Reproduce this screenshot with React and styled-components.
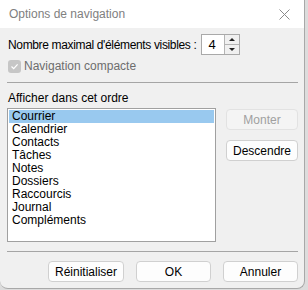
import React from 'react'
import styled, { createGlobalStyle } from 'styled-components'

const GlobalStyle = createGlobalStyle`
  html, body {
    margin: 0;
    padding: 0;
    background: #dcdcdc;
  }
  body {
    font-family: "Liberation Sans", Arial, sans-serif;
    font-size: 12px;
    color: #000;
  }
`

const Window = styled.div`
  width: 304px;
  height: 288px;
  background: #f0f0f0;
  border-right: 1px solid #a8a8a8;
  border-bottom: 1px solid #a8a8a8;
  border-radius: 0 0 8px 8px;
  display: flex;
  flex-direction: column;
  overflow: hidden;
`

const TitleBar = styled.div`
  height: 28px;
  background: #fff;
  display: flex;
  align-items: center;
  justify-content: space-between;
  padding: 0 14px 0 9px;
  color: #808080;
  font-size: 12px;
`

const Body = styled.div`
  flex: 1;
  padding: 0 6px 0 7px;
  display: flex;
  flex-direction: column;
`

const CountRow = styled.div`
  display: flex;
  align-items: center;
  height: 21px;
  margin-top: 6px;
  padding-left: 1px;
  gap: 5px;
`

const CountLabel = styled.span`
  letter-spacing: -0.35px;
`

const Spin = styled.div`
  display: flex;
  width: 39px;
  height: 21px;
  box-sizing: border-box;
  border: 1px solid #a9a9a9;
  background: #fff;
`

const SpinValue = styled.div`
  flex: 1;
  padding-left: 6px;
  display: flex;
  align-items: center;
  font-size: 13px;
`

const SpinArrows = styled.div`
  width: 14px;
  display: flex;
  flex-direction: column;
  border-left: 1px solid #b4b4b4;
  background: #f0f0f0;
`

const Arrow = styled.div`
  flex: 1;
  display: flex;
  align-items: center;
  justify-content: center;
  border-top: ${(p) => (p.$down ? '1px solid #b4b4b4' : 'none')};
  &::after {
    content: '';
    border-left: 3px solid transparent;
    border-right: 3px solid transparent;
    ${(p) => (p.$down ? 'border-top: 3px solid #222;' : 'border-bottom: 3px solid #222;')}
  }
`

const CheckRow = styled.label`
  display: flex;
  align-items: center;
  gap: 3px;
  margin-top: 4px;
  height: 14px;
  padding-left: 1px;
  color: #6d6d6d;
`

const Check = styled.span`
  width: 13px;
  height: 13px;
  border-radius: 3px;
  background: #c6c6c6;
  display: flex;
  align-items: center;
  justify-content: center;
`

const Separator = styled.div`
  height: 1px;
  background: #a5a5a5;
  margin-top: ${(p) => p.$top}px;
`

const ListLabel = styled.div`
  margin-top: 8px;
  padding-left: 1px;
  height: 15px;
  line-height: 15px;
`

const ListArea = styled.div`
  display: flex;
  align-items: flex-start;
  gap: 10px;
  margin-top: 2px;
`

const ListBox = styled.ul`
  list-style: none;
  margin: 0;
  width: 209px;
  height: 134px;
  box-sizing: border-box;
  border: 1px solid #a0a0a0;
  background: #fff;
  padding: 1px;
`

const Item = styled.li`
  height: 13px;
  line-height: 13px;
  padding-left: 3px;
  background: ${(p) => (p.$selected ? '#99c9ef' : 'transparent')};
`

const SideButtons = styled.div`
  display: flex;
  flex-direction: column;
  gap: 10px;
  margin-top: 1px;
`

const Button = styled.button`
  width: ${(p) => p.$w || 75}px;
  height: 21px;
  box-sizing: border-box;
  font-family: inherit;
  font-size: 12px;
  border-radius: 4px;
  padding: 0;
  border: 1px solid ${(p) => (p.disabled ? '#e2e2e2' : '#d0d0d0')};
  background: ${(p) => (p.disabled ? '#f4f4f4' : '#fdfdfd')};
  color: ${(p) => (p.disabled ? '#a0a0a0' : '#000')};
`

const Footer = styled.div`
  display: flex;
  justify-content: flex-end;
  gap: 12px;
  margin-top: 9px;
`

const items = ['Courrier', 'Calendrier', 'Contacts', 'Tâches', 'Notes', 'Dossiers', 'Raccourcis', 'Journal', 'Compléments']

const App = () => {
  return (
    <>
      <GlobalStyle />
      <Window>
        <TitleBar>
          <span>Options de navigation</span>
          <svg width="11" height="11" viewBox="0 0 11 11">
            <path d="M0.5 0.5 L10.5 10.5 M10.5 0.5 L0.5 10.5" stroke="#8a8a8a" strokeWidth="1" />
          </svg>
        </TitleBar>
        <Body>
          <CountRow>
            <CountLabel>Nombre maximal d'éléments visibles :</CountLabel>
            <Spin>
              <SpinValue>4</SpinValue>
              <SpinArrows>
                <Arrow />
                <Arrow $down />
              </SpinArrows>
            </Spin>
          </CountRow>
          <CheckRow>
            <Check>
              <svg width="9" height="9" viewBox="0 0 9 9">
                <path d="M1.5 4.5 L3.7 6.7 L7.6 2.3" stroke="#fff" strokeWidth="1.2" fill="none" />
              </svg>
            </Check>
            <span>Navigation compacte</span>
          </CheckRow>
          <Separator $top={9} />
          <ListLabel>Afficher dans cet ordre</ListLabel>
          <ListArea>
            <ListBox>
              {items.map((item, i) => (
                <Item key={item} $selected={i === 0}>{item}</Item>
              ))}
            </ListBox>
            <SideButtons>
              <Button $w={72} disabled>Monter</Button>
              <Button $w={72}>Descendre</Button>
            </SideButtons>
          </ListArea>
          <Separator $top={9} />
          <Footer>
            <Button $w={76}>Réinitialiser</Button>
            <Button>OK</Button>
            <Button>Annuler</Button>
          </Footer>
        </Body>
      </Window>
    </>
  )
}

export default App
